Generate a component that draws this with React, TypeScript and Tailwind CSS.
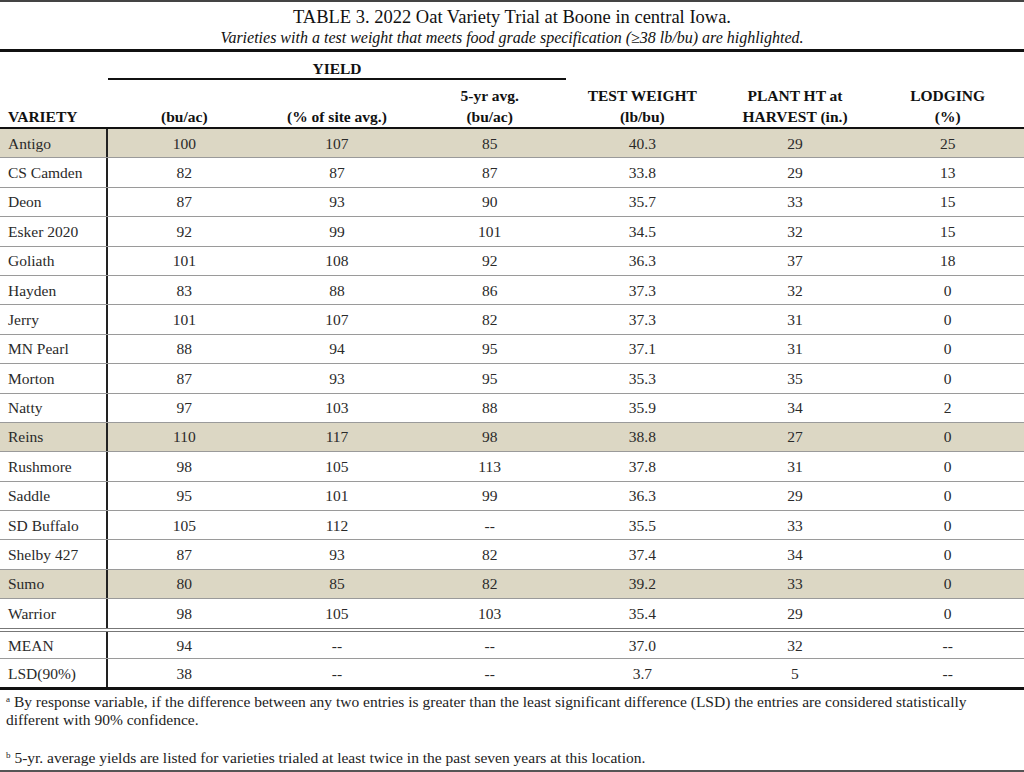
import React from "react";

type Row = {
  name: string;
  y: string;
  pct: string;
  avg5: string;
  tw: string;
  ht: string;
  lodg: string;
  hi?: boolean;
};

const rows: Row[] = [
  { name: "Antigo", y: "100", pct: "107", avg5: "85", tw: "40.3", ht: "29", lodg: "25", hi: true },
  { name: "CS Camden", y: "82", pct: "87", avg5: "87", tw: "33.8", ht: "29", lodg: "13" },
  { name: "Deon", y: "87", pct: "93", avg5: "90", tw: "35.7", ht: "33", lodg: "15" },
  { name: "Esker 2020", y: "92", pct: "99", avg5: "101", tw: "34.5", ht: "32", lodg: "15" },
  { name: "Goliath", y: "101", pct: "108", avg5: "92", tw: "36.3", ht: "37", lodg: "18" },
  { name: "Hayden", y: "83", pct: "88", avg5: "86", tw: "37.3", ht: "32", lodg: "0" },
  { name: "Jerry", y: "101", pct: "107", avg5: "82", tw: "37.3", ht: "31", lodg: "0" },
  { name: "MN Pearl", y: "88", pct: "94", avg5: "95", tw: "37.1", ht: "31", lodg: "0" },
  { name: "Morton", y: "87", pct: "93", avg5: "95", tw: "35.3", ht: "35", lodg: "0" },
  { name: "Natty", y: "97", pct: "103", avg5: "88", tw: "35.9", ht: "34", lodg: "2" },
  { name: "Reins", y: "110", pct: "117", avg5: "98", tw: "38.8", ht: "27", lodg: "0", hi: true },
  { name: "Rushmore", y: "98", pct: "105", avg5: "113", tw: "37.8", ht: "31", lodg: "0" },
  { name: "Saddle", y: "95", pct: "101", avg5: "99", tw: "36.3", ht: "29", lodg: "0" },
  { name: "SD Buffalo", y: "105", pct: "112", avg5: "--", tw: "35.5", ht: "33", lodg: "0" },
  { name: "Shelby 427", y: "87", pct: "93", avg5: "82", tw: "37.4", ht: "34", lodg: "0" },
  { name: "Sumo", y: "80", pct: "85", avg5: "82", tw: "39.2", ht: "33", lodg: "0", hi: true },
  { name: "Warrior", y: "98", pct: "105", avg5: "103", tw: "35.4", ht: "29", lodg: "0" },
];

const summary: Row[] = [
  { name: "MEAN", y: "94", pct: "--", avg5: "--", tw: "37.0", ht: "32", lodg: "--" },
  { name: "LSD(90%)", y: "38", pct: "--", avg5: "--", tw: "3.7", ht: "5", lodg: "--" },
];

function DataRow({ r, className }: { r: Row; className: string }) {
  const cells = [r.y, r.pct, r.avg5, r.tw, r.ht, r.lodg];
  return (
    <div
      className={`grid grid-cols-[108px_repeat(6,1fr)] items-stretch ${
        r.hi ? "bg-[#dcd7c4]" : ""
      } ${className}`}
    >
      <div className="flex items-center pl-[8px] border-r-2 border-[#222]">{r.name}</div>
      {cells.map((c, i) => (
        <div key={i} className="flex items-center justify-center">
          {c}
        </div>
      ))}
    </div>
  );
}

export default function App() {
  return (
    <div className="w-[1024px] h-[772px] bg-white font-['Liberation_Serif',serif] text-[#222] overflow-hidden">
      {/* title */}
      <div className="border-t-2 border-[#444] h-[49px] flex flex-col items-center pt-[4px]">
        <div className="text-[18.5px] leading-[22px] text-[#111]">
          TABLE 3. 2022 Oat Variety Trial at Boone in central Iowa.
        </div>
        <div className="text-[16px] leading-[20px] italic text-[#111]">
          Varieties with a test weight that meets food grade specification (≥38 lb/bu) are highlighted.
        </div>
      </div>

      {/* header */}
      <div className="border-t-[3px] border-b-2 border-[#111] grid grid-cols-[108px_repeat(6,1fr)] grid-rows-[28px_47px] font-bold text-[15.5px] leading-[21px] text-[#111]">
        <div className="row-span-2 flex items-end pl-[8px]">VARIETY</div>
        <div className="col-span-3 border-b-2 border-[#111] flex justify-center pt-[6px]">YIELD</div>
        <div className="col-span-3" />
        <div className="flex items-end justify-center text-center">(bu/ac)</div>
        <div className="flex items-end justify-center text-center">(% of site avg.)</div>
        <div className="flex items-end justify-center text-center">
          5-yr avg.
          <br />
          (bu/ac)
        </div>
        <div className="flex items-end justify-center text-center">
          TEST WEIGHT
          <br />
          (lb/bu)
        </div>
        <div className="flex items-end justify-center text-center">
          PLANT HT at
          <br />
          HARVEST (in.)
        </div>
        <div className="flex items-end justify-center text-center">
          LODGING
          <br />
          (%)
        </div>
      </div>

      {/* body */}
      <div className="text-[15.5px] text-[#2a2a2a] border-b-[3px] border-[#111]">
        {rows.map((r, i) =>
          i === rows.length - 1 ? (
            <DataRow key={r.name} r={r} className="h-[33px] border-b-[4px] border-double border-[#777]" />
          ) : (
            <DataRow key={r.name} r={r} className="h-[29.4px] border-b border-[#9a9a9a]" />
          )
        )}
        <DataRow r={summary[0]} className="h-[27px] border-b border-[#9a9a9a]" />
        <DataRow r={summary[1]} className="h-[28px]" />
      </div>

      {/* footnotes */}
      <div className="h-[82px] border-b-2 border-[#555] pt-[3px] pl-[6px] pr-[24px] text-[15.5px] leading-[18px] text-[#222]">
        <p>
          <span className="text-[9px] leading-none align-[5px]">a</span> By response variable, if the difference
          between any two entries is greater than the least significant difference (LSD) the entries are considered
          statistically different with 90% confidence.
        </p>
        <p className="mt-[20px]">
          <span className="text-[9px] leading-none align-[5px]">b</span> 5-yr. average yields are listed for varieties
          trialed at least twice in the past seven years at this location.
        </p>
      </div>
    </div>
  );
}
